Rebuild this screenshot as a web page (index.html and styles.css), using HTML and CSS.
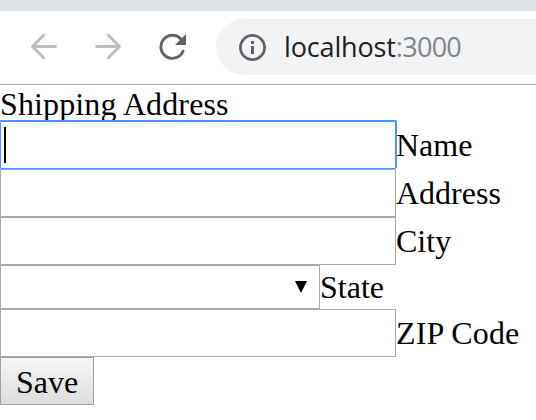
FILE: index.html
```
<!DOCTYPE html>
<html lang="en">
<head>
<meta charset="utf-8">
<title>Shipping Address</title>
<link rel="stylesheet" href="styles.css">
</head>
<body>
<div class="tabstrip"></div>
<header class="toolbar">
  <svg class="icon back" viewBox="0 0 28 28"><path d="M25.500 13.500H2.500M13.700 2.300L2.500 13.500L13.700 24.700"/></svg>
  <svg class="icon forward" viewBox="0 0 28 28"><path d="M2.500 13.500H25.500M14.300 2.300L25.500 13.500L14.300 24.700"/></svg>
  <svg class="icon reload" viewBox="0 0 28 28"><path class="arc" d="M22 6.200A11.500 11.500 0 1 0 24 18.200"/><path class="tip" d="M27 1V12H16Z"/></svg>
  <div class="omnibox">
    <svg class="info" viewBox="0 0 28 28"><circle cx="14.500" cy="14.500" r="12.100"/><path d="M13 8h3v3h-3zM13 13h3v8h-3z"/></svg>
    <span class="url"><span class="host">localhost</span><span class="port">:3000</span></span>
  </div>
</header>
<form class="form">
  <div class="title">Shipping Address</div>
  <div class="row"><div class="field focused"><span class="caret"></span></div><label>Name</label></div>
  <div class="row"><div class="field"></div><label>Address</label></div>
  <div class="row"><div class="field"></div><label>City</label></div>
  <div class="row state"><div class="field select"><svg class="arrow" viewBox="0 0 12 12"><path d="M0 0H12L6 12Z"/></svg></div><label>State</label></div>
  <div class="row"><div class="field"></div><label class="zip">ZIP Code</label></div>
  <button class="save" type="button">Save</button>
</form>
</body>
</html>
```
FILE: styles.css
```
* { box-sizing: border-box; }
body {
  margin: 0;
  height: 420px;
  overflow: hidden;
  background: #fff;
  color: #000;
  font: 32px/36px "Liberation Serif", serif;
}
.tabstrip { height: 11px; background: #dee1e6; }
.toolbar {
  display: flex;
  align-items: center;
  height: 74px;
  padding: 0 0 1px 30px;
  border-bottom: 1px solid #b0b0b0;
}
.icon { flex: none; width: 28px; height: 28px; fill: none; stroke-width: 2.900; stroke-linecap: round; stroke-linejoin: round; }
.back, .forward { stroke: #babcbe; }
.forward { margin-left: 36px; }
.reload { margin-left: 37px; }
.reload .arc { stroke: #5f6368; }
.reload .tip { fill: #5f6368; }
.omnibox {
  display: flex;
  align-items: center;
  flex: 1;
  height: 56px;
  margin-left: 29px;
  padding-left: 22px;
  border-radius: 28px 0 0 28px;
  background: #f1f3f4;
}
.info { flex: none; width: 28px; height: 28px; }
.info circle { fill: none; stroke: #5f6368; stroke-width: 2.700; }
.info path { fill: #5f6368; }
.url {
  margin-left: 18px;
  font: 27px/36px "Open Sans", sans-serif;
  white-space: nowrap;
}
.host { color: #202124; letter-spacing: -0.15px; }
.port { color: #80868b; letter-spacing: -0.7px; }
.title { height: 36px; padding-top: 1px; letter-spacing: 0.12px; }
.row { display: flex; align-items: center; height: 48px; }
.row .zip { letter-spacing: 0.12px; }
.field { width: 396px; height: 48px; border: 1px solid #a9a9a9; }
.focused {
  padding: 5px 0 0 3px;
  border-color: #4d90fe;
  border-radius: 1px;
  box-shadow: 1px -1px 0 #4d90fe, 0 -1px 0 #4d90fe;
}
.caret { display: block; width: 2px; height: 36px; background: #000; }
.row.state { height: 44px; }
.select {
  display: flex;
  align-items: center;
  justify-content: flex-end;
  width: 320px;
  height: 44px;
  padding-right: 12px;
}
.arrow { width: 12px; height: 12px; }
.save {
  display: block;
  width: 94px;
  height: 48px;
  margin: 0;
  padding: 2px 0 0;
  border: 1px solid #a0a0a0;
  border-radius: 0;
  background: linear-gradient(#f6f6f6, #dddddd);
  color: #000;
  font: inherit;
}
```
